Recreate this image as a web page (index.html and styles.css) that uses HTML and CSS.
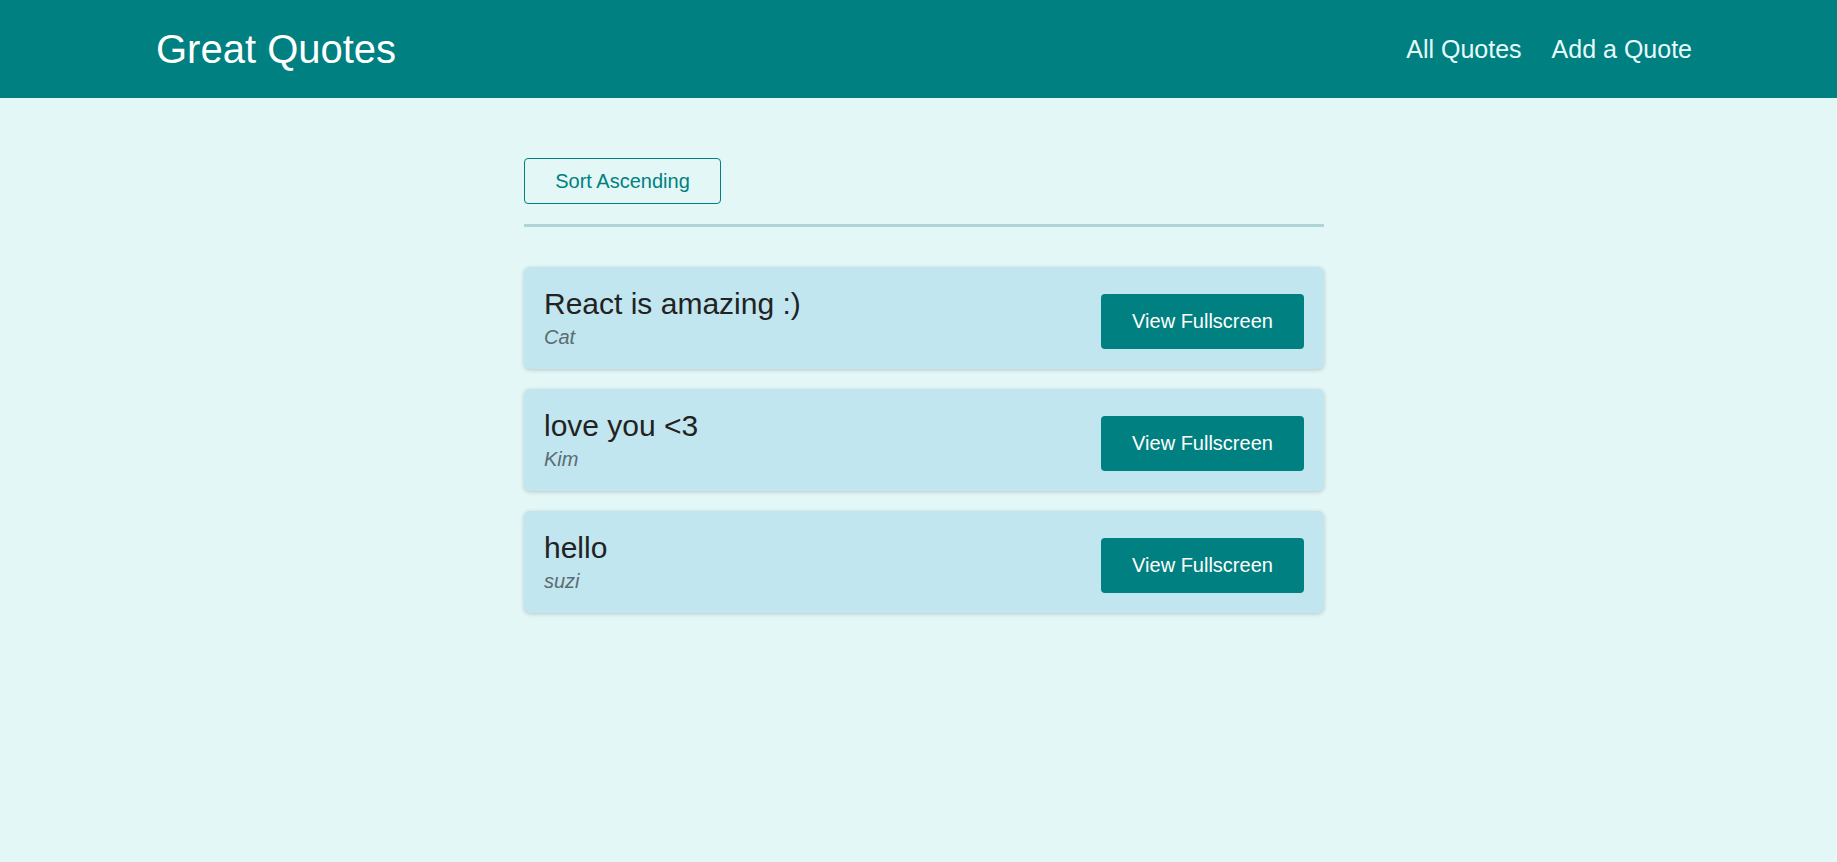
FILE: index.html
```html
<!DOCTYPE html>
<html lang="en">
<head>
<meta charset="utf-8">
<title>Great Quotes</title>
<link rel="stylesheet" href="styles.css">
</head>
<body>
<header class="header">
  <div class="logo">Great Quotes</div>
  <nav class="nav">
    <a class="nav-link" href="#">All Quotes</a>
    <a class="nav-link" href="#">Add a Quote</a>
  </nav>
</header>
<main class="main">
  <div class="sorting">
    <button class="sort-btn">Sort Ascending</button>
  </div>
  <ul class="list">
    <li class="item">
      <figure class="quote">
        <blockquote class="quote-text">React is amazing :)</blockquote>
        <figcaption class="quote-author">Cat</figcaption>
      </figure>
      <a class="btn" href="#">View Fullscreen</a>
    </li>
    <li class="item">
      <figure class="quote">
        <blockquote class="quote-text">love you &lt;3</blockquote>
        <figcaption class="quote-author">Kim</figcaption>
      </figure>
      <a class="btn" href="#">View Fullscreen</a>
    </li>
    <li class="item">
      <figure class="quote">
        <blockquote class="quote-text">hello</blockquote>
        <figcaption class="quote-author">suzi</figcaption>
      </figure>
      <a class="btn" href="#">View Fullscreen</a>
    </li>
  </ul>
</main>
</body>
</html>
```
FILE: styles.css
```css
* { box-sizing: border-box; }
html, body { margin: 0; padding: 0; }
body {
  font-family: "Liberation Sans", Arial, sans-serif;
  background: #e4f7f7;
  min-height: 862px;
}
.header {
  height: 98px;
  background: #008080;
  display: flex;
  align-items: center;
  justify-content: space-between;
  padding: 0 145px 0 156px;
}
.logo {
  color: #ffffff;
  font-size: 40px;
}
.nav {
  display: flex;
  gap: 30px;
}
.nav-link {
  color: #e6fcfc;
  font-size: 25px;
  text-decoration: none;
}
.main {
  width: 800px;
  margin: 60px 0 0 calc(50% - 394.5px);
}
.sorting {
  padding-bottom: 20px;
  border-bottom: 3px solid #b0d5d6;
}
.sort-btn {
  font-family: "Liberation Sans", Arial, sans-serif;
  font-size: 20px;
  color: #008080;
  background: transparent;
  border: 1px solid #008080;
  border-radius: 4px;
  height: 46px;
  width: 197px;
  padding: 0;
  cursor: pointer;
}
.list {
  list-style: none;
  margin: 40px 0 0;
  padding: 0;
  display: flex;
  flex-direction: column;
  gap: 20px;
}
.item {
  background: #c1e6ef;
  border-radius: 6px;
  box-shadow: 0 1px 4px rgba(0, 0, 0, 0.2);
  padding: 20px;
  display: flex;
  justify-content: space-between;
  align-items: flex-end;
}
.quote {
  margin: 0;
}
.quote-text {
  margin: 0 0 5px;
  font-size: 30px;
  color: #222222;
}
.quote-author {
  font-size: 20px;
  font-style: italic;
  color: #5b6c72;
}
.btn {
  display: block;
  background: #008080;
  color: #ffffff;
  font-size: 20px;
  text-decoration: none;
  border-radius: 4px;
  height: 55px;
  line-height: 55px;
  width: 203px;
  text-align: center;
}
```
